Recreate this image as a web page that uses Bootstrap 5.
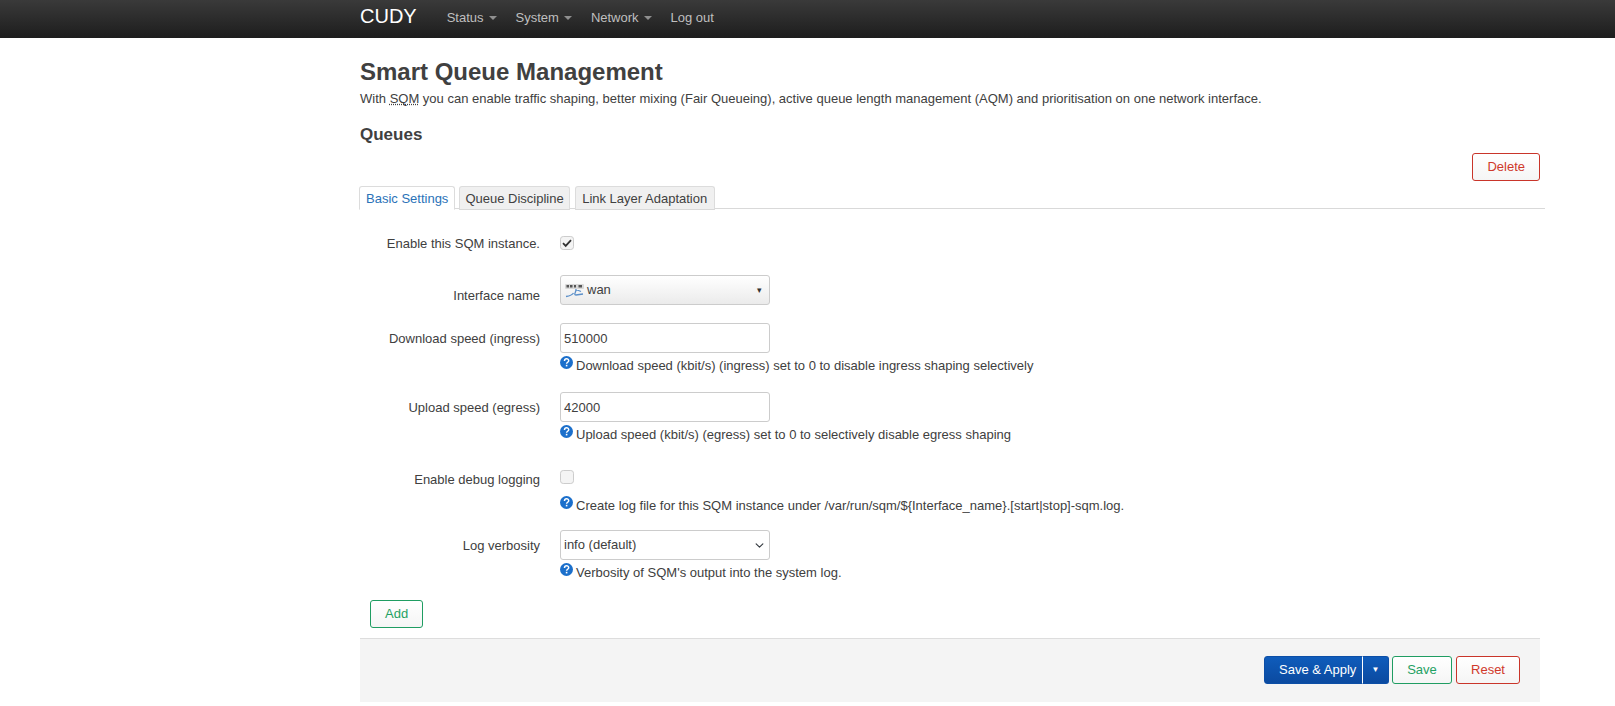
<!DOCTYPE html>
<html lang="en">
<head>
  <meta charset="UTF-8">
  <title>CUDY - Smart Queue Management</title>
  <link href="https://cdn.jsdelivr.net/npm/bootstrap@5.3.0/dist/css/bootstrap.min.css" rel="stylesheet">
  <style>
    body {
      font-family: "Liberation Sans", Arial, sans-serif;
      font-size: 13px;
      line-height: 18px;
      color: #404040;
      background: #fff;
    }
    .top-bar {
      height: 38px;
      padding: 0;
      background: linear-gradient(#3a3a3a, #1d1d1d);
    }
    .page-wrap {
      width: 1185px;
      margin-left: 360px;
    }
    .top-bar .navbar-brand {
      font-size: 20px;
      line-height: 32px;
      color: #fff;
      padding: 0 0 6px;
      margin-right: 30px;
    }
    .top-bar .nav-link {
      font-size: 13px;
      line-height: 18px;
      color: #bfbfbf;
      padding: 9px 0 11px;
      margin-right: 19px;
    }
    .top-caret {
      display: inline-block;
      width: 0;
      height: 0;
      margin-left: 5px;
      vertical-align: 2px;
      border-top: 4px solid #8f8f8f;
      border-left: 4px solid transparent;
      border-right: 4px solid transparent;
    }
    .page-title {
      font-size: 24px;
      line-height: 30px;
      font-weight: 700;
      margin: 19px 0 3px;
      color: #404040;
    }
    .page-desc { margin: 0 0 16px; }
    .page-desc abbr {
      text-decoration: underline dotted;
      cursor: help;
    }
    .sect-title {
      font-size: 17px;
      line-height: 22px;
      font-weight: 700;
      margin: 0;
      color: #404040;
    }
    .del-row {
      height: 28px;
      margin-top: 7px;
      padding-right: 5px;
    }
    .act-btn {
      font-size: 13px;
      line-height: 18px;
      height: 28px;
      padding: 4px 14px;
      border-radius: 3px;
      background: linear-gradient(#fff, #f5f5f5);
    }
    .act-red { color: #d0392b; border: 1px solid #c9352a; }
    .act-green { color: #1fa163; border: 1px solid #1f9d62; }
    .act-blue {
      color: #fff;
      border: 1px solid #0c4ea6;
      background: linear-gradient(#0f5cbb, #0b4aa0);
    }
    .tab-strip {
      margin-top: 5px;
      margin-left: -1px;
      height: 23px;
      gap: 4px;
      border-bottom: 1px solid #d9d9d9;
    }
    .tab-strip .nav-link {
      font-size: 13px;
      line-height: 18px;
      height: 24px;
      padding: 3px 6px;
      margin: 0;
      color: #404040;
      background: #f0f0f0;
      border: 1px solid #dcdcdc;
      border-bottom-color: #d9d9d9;
      border-radius: 3px 3px 0 0;
    }
    .tab-strip .nav-link.tab-tight { padding: 3px 5px; }
    .tab-strip .nav-link.tab-wide { padding: 3px 6.5px; margin-left: 1px; }
    .tab-strip .nav-link.active {
      color: #2a72b8;
      background: #fff;
      border-color: #dcdcdc #dcdcdc #fff;
    }
    .field-row { display: flex; }
    .field-label {
      width: 180px;
      margin: 0;
      text-align: right;
      flex-shrink: 0;
    }
    .field-body {
      width: 600px;
      margin-left: 20px;
    }
    .field-input {
      width: 210px;
      height: 30px;
      font-size: 13px;
      line-height: 18px;
      color: #404040;
      padding: 5px 3px;
      border: 1px solid #ccc;
      border-radius: 3px;
      box-shadow: none;
    }
    select.field-input {
      padding-right: 20px;
      background-position: right 4px center;
      background-size: 11px 9px;
    }
    .iface-pick {
      background: linear-gradient(#fff, #ebebeb);
      padding: 5px 7px 5px 4px;
    }
    .iface-glyph { margin-right: 2px; }
    .iface-arrow { font-size: 9px; color: #333; }
    .tick-box {
      width: 14px;
      height: 14px;
      margin: 0;
      border: 1px solid #ccc;
      border-radius: 2px;
      background-color: #f4f4f4;
      box-shadow: none;
    }
    .tick-box:checked {
      background-color: #f4f4f4;
      border-color: #ccc;
      background-image: url("data:image/svg+xml,%3csvg xmlns='http://www.w3.org/2000/svg' viewBox='0 0 14 14'%3e%3cpath fill='none' stroke='%23333' stroke-width='1.8' d='M3 7.2l2.7 2.7L11 4.2'/%3e%3c/svg%3e");
      background-size: 14px 14px;
    }
    .help-line {
      display: flex;
      align-items: flex-start;
      gap: 3px;
      height: 19px;
      margin-top: 3px;
    }
    .help-line span { padding-top: 1px; }
    .help-icon { flex-shrink: 0; }
    .add-line { padding-left: 10px; margin-top: 18px; }
    .foot-bar {
      width: 1180px;
      height: 64px;
      margin-top: 10px;
      padding: 17px 20px 0 0;
      gap: 4px;
      background: #f4f4f4;
      border-top: 1px solid #ddd;
    }
    .split-group { margin-right: -1px; }
    .split-main { width: 99px; padding: 4px 0 4px 14px; text-align: left; }
    .split-side {
      width: 27px;
      padding: 4px 0;
      font-size: 8px;
      border-left: 1px solid #fff;
    }
    .foot-save { width: 60px; padding: 4px 0; }
    .foot-reset { width: 64px; padding: 4px 0; }
    .gap-row1 { margin-top: 27px; }
    .gap-row2 { margin-top: 22px; }
    .gap-row3 { margin-top: 18px; }
    .gap-row4 { margin-top: 17px; }
    .gap-row5 { margin-top: 26px; }
    .gap-row6 { margin-top: 15px; }
    .lbl-tick { margin-top: -1px; }
    .lbl-tick-low { margin-top: 1px; }
    .lbl-iface { padding-top: 12px; }
    .lbl-input { padding-top: 7px; }
    .help-after-tick { margin-top: 12px; }
  </style>
</head>
<body>
  <nav class="navbar top-bar">
    <div class="page-wrap d-flex align-items-center">
      <a class="navbar-brand" href="#">CUDY</a>
      <ul class="nav">
        <li class="nav-item"><a class="nav-link" href="#">Status<span class="top-caret"></span></a></li>
        <li class="nav-item"><a class="nav-link" href="#">System<span class="top-caret"></span></a></li>
        <li class="nav-item"><a class="nav-link" href="#">Network<span class="top-caret"></span></a></li>
        <li class="nav-item"><a class="nav-link" href="#">Log out</a></li>
      </ul>
    </div>
  </nav>

  <main class="page-wrap">
    <h1 class="page-title">Smart Queue Management</h1>
    <p class="page-desc">With <abbr title="Smart Queue Management">SQM</abbr> you can enable traffic shaping, better mixing (Fair Queueing), active queue length management (AQM) and prioritisation on one network interface.</p>
    <h2 class="sect-title">Queues</h2>

    <div class="del-row d-flex justify-content-end">
      <button type="button" class="btn act-btn act-red">Delete</button>
    </div>

    <ul class="nav nav-tabs tab-strip">
      <li class="nav-item"><a class="nav-link active" href="#">Basic Settings</a></li>
      <li class="nav-item"><a class="nav-link tab-tight" href="#">Queue Discipline</a></li>
      <li class="nav-item"><a class="nav-link tab-wide" href="#">Link Layer Adaptation</a></li>
    </ul>

    <form>
      <div class="field-row gap-row1">
        <label class="field-label lbl-tick">Enable this SQM instance.</label>
        <div class="field-body"><input class="form-check-input tick-box d-block" type="checkbox" checked></div>
      </div>

      <div class="field-row gap-row2">
        <label class="field-label lbl-iface">Interface name</label>
        <div class="field-body">
          <div class="form-control field-input iface-pick d-flex align-items-center">
            <svg class="iface-glyph" width="20" height="16" viewBox="0 0 20 16" aria-hidden="true">
              <rect x="0" y="2" width="19" height="5" rx="1" fill="#d8d8d8"/>
              <path d="M1.500 3h2.500v2.500h-2.500zM5 3h2.500v2.500h-2.500zM9 3h2v2.500h-2zM13.500 3h3.500v2.500h-3.500z" fill="#555"/>
              <path d="M1 14.500c3-.5 6-1 7.500-3.500M11 7c.5 3-3 5.500 0 6l7-1M11 7.500l5 2" fill="none" stroke="#5b8fc9" stroke-width="1.300"/>
            </svg>
            <span class="flex-grow-1">wan</span>
            <span class="iface-arrow">&#9662;</span>
          </div>
        </div>
      </div>

      <div class="field-row gap-row3">
        <label class="field-label lbl-input">Download speed (ingress)</label>
        <div class="field-body">
          <input class="form-control field-input" type="text" value="510000">
          <div class="help-line">
            <svg class="help-icon" width="13" height="13" viewBox="0 0 13 13" aria-hidden="true"><circle cx="6.500" cy="6.500" r="6.500" fill="#1b6fcb"/><path d="M4.500 5c0-3 4.200-2.800 4.200-.3 0 1.500-2.100 1.600-2.100 3.100" fill="none" stroke="#fff" stroke-width="1.500"/><rect x="5.800" y="8.800" width="1.600" height="1.600" fill="#fff"/></svg>
            <span>Download speed (kbit/s) (ingress) set to 0 to disable ingress shaping selectively</span>
          </div>
        </div>
      </div>

      <div class="field-row gap-row4">
        <label class="field-label lbl-input">Upload speed (egress)</label>
        <div class="field-body">
          <input class="form-control field-input" type="text" value="42000">
          <div class="help-line">
            <svg class="help-icon" width="13" height="13" viewBox="0 0 13 13" aria-hidden="true"><circle cx="6.500" cy="6.500" r="6.500" fill="#1b6fcb"/><path d="M4.500 5c0-3 4.200-2.800 4.200-.3 0 1.500-2.100 1.600-2.100 3.100" fill="none" stroke="#fff" stroke-width="1.500"/><rect x="5.800" y="8.800" width="1.600" height="1.600" fill="#fff"/></svg>
            <span>Upload speed (kbit/s) (egress) set to 0 to selectively disable egress shaping</span>
          </div>
        </div>
      </div>

      <div class="field-row gap-row5">
        <label class="field-label lbl-tick-low">Enable debug logging</label>
        <div class="field-body">
          <input class="form-check-input tick-box d-block" type="checkbox">
          <div class="help-line help-after-tick">
            <svg class="help-icon" width="13" height="13" viewBox="0 0 13 13" aria-hidden="true"><circle cx="6.500" cy="6.500" r="6.500" fill="#1b6fcb"/><path d="M4.500 5c0-3 4.200-2.800 4.200-.3 0 1.500-2.100 1.600-2.100 3.100" fill="none" stroke="#fff" stroke-width="1.500"/><rect x="5.800" y="8.800" width="1.600" height="1.600" fill="#fff"/></svg>
            <span>Create log file for this SQM instance under /var/run/sqm/${Interface_name}.[start|stop]-sqm.log.</span>
          </div>
        </div>
      </div>

      <div class="field-row gap-row6">
        <label class="field-label lbl-input">Log verbosity</label>
        <div class="field-body">
          <select class="form-select field-input">
            <option>info (default)</option>
            <option>debug</option>
          </select>
          <div class="help-line">
            <svg class="help-icon" width="13" height="13" viewBox="0 0 13 13" aria-hidden="true"><circle cx="6.500" cy="6.500" r="6.500" fill="#1b6fcb"/><path d="M4.500 5c0-3 4.200-2.800 4.200-.3 0 1.500-2.100 1.600-2.100 3.100" fill="none" stroke="#fff" stroke-width="1.500"/><rect x="5.800" y="8.800" width="1.600" height="1.600" fill="#fff"/></svg>
            <span>Verbosity of SQM's output into the system log.</span>
          </div>
        </div>
      </div>

      <div class="add-line">
        <button type="button" class="btn act-btn act-green">Add</button>
      </div>
    </form>

    <div class="foot-bar d-flex justify-content-end align-items-start">
      <div class="btn-group split-group">
        <button type="button" class="btn act-btn act-blue split-main">Save &amp; Apply</button>
        <button type="button" class="btn act-btn act-blue split-side">&#9660;</button>
      </div>
      <button type="button" class="btn act-btn act-green foot-save">Save</button>
      <button type="button" class="btn act-btn act-red foot-reset">Reset</button>
    </div>
  </main>

  <script src="https://cdn.jsdelivr.net/npm/bootstrap@5.3.0/dist/js/bootstrap.bundle.min.js"></script>
</body>
</html>
